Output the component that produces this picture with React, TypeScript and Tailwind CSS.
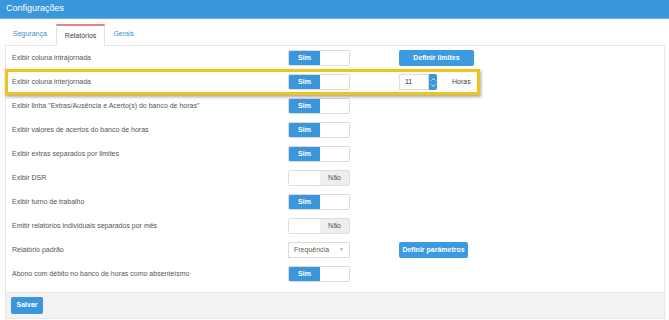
import React from 'react';

type Row = {
  label: string;
  on?: boolean;
  kind?: 'toggle' | 'select';
  extra?: 'limites' | 'horas' | 'parametros';
};

const rows: Row[] = [
  { label: 'Exibir coluna intrajornada', on: true, extra: 'limites' },
  { label: 'Exibir coluna interjornada', on: true, extra: 'horas' },
  { label: 'Exibir linha "Extras/Ausência e Acerto(s) do banco de horas"', on: true },
  { label: 'Exibir valores de acertos do banco de horas', on: true },
  { label: 'Exibir extras separados por limites', on: true },
  { label: 'Exibir DSR', on: false },
  { label: 'Exibir turno de trabalho', on: true },
  { label: 'Emitir relatórios individuais separados por mês', on: false },
  { label: 'Relatório padrão', kind: 'select', extra: 'parametros' },
  { label: 'Abono com débito no banco de horas como absenteísmo', on: true },
];

function Toggle({ on }: { on: boolean }) {
  return (
    <div className="flex h-[16px] w-[62px] rounded-[2px] border border-[#dcdcdc] overflow-hidden text-[7px]">
      {on ? (
        <>
          <div className="w-[31px] bg-[#3a97db] text-white font-bold flex items-center justify-center">Sim</div>
          <div className="flex-1 bg-white" />
        </>
      ) : (
        <>
          <div className="w-[31px] bg-white" />
          <div className="flex-1 bg-[#eeeeee] text-[#555] flex items-center justify-center">Não</div>
        </>
      )}
    </div>
  );
}

function BlueButton({ children, width }: { children: React.ReactNode; width: string }) {
  return (
    <div className={`${width} h-[16px] rounded-[2px] bg-[#3b9ae0] text-white text-[7px] font-bold flex items-center justify-center`}>
      {children}
    </div>
  );
}

export default function App() {
  return (
    <div
      className="relative w-[669px] h-[320px] bg-white overflow-hidden text-[#555]"
      style={{ fontFamily: '"Liberation Sans", Arial, sans-serif' }}
    >
      <div className="h-[19px] bg-[#3a97db] border-b border-[#6fb4e6] flex items-center pl-[6px]">
        <span className="text-white text-[9px]">Configurações</span>
      </div>

      <div className="mt-[5px] ml-[5px] mr-[5px] flex h-[21px] text-[7px]">
        <div className="pl-[8px] pr-[9px] flex items-center text-[#3a8fd0]">Segurança</div>
        <div className="px-[8px] flex items-center text-[#444] bg-white border-t-2 border-[#f08080] border-x border-x-[#e3e3e3] relative -mb-px">
          Relatórios
        </div>
        <div className="px-[8px] flex items-center text-[#3a8fd0]">Gerais</div>
      </div>

      <div className="ml-[5px] w-[660px] h-[274px] border border-[#e6e6e6] flex flex-col">
        <div className="flex-1 pl-[6px]">
          {rows.map((r, i) => (
            <div key={i} className="h-[24px] flex items-center text-[7px]">
              <div className="w-[276px]">{r.label}</div>
              <div className="w-[111px]">
                {r.kind === 'select' ? (
                  <div className="w-[62px] h-[16px] border border-[#dcdcdc] bg-white flex items-center justify-between px-[5px]">
                    <span className="text-[#6a5a48]">Frequência</span>
                    <span className="text-[#aaa] text-[5px]">▼</span>
                  </div>
                ) : (
                  <Toggle on={!!r.on} />
                )}
              </div>
              {r.extra === 'limites' && <BlueButton width="w-[75px]">Definir limites</BlueButton>}
              {r.extra === 'parametros' && <BlueButton width="w-[69px]">Definir parâmetros</BlueButton>}
              {r.extra === 'horas' && (
                <div className="flex items-center">
                  <div className="w-[30px] h-[16px] border border-[#dcdcdc] bg-white flex items-center pl-[5px] text-[#333]">11</div>
                  <div className="w-[8px] h-[16px] bg-[#3a97db] rounded-r-[2px] flex flex-col items-center justify-center gap-[3px]">
                    <svg width="5" height="3" viewBox="0 0 5 3">
                      <path d="M0.5 2.5 L2.5 0.5 L4.5 2.5" stroke="white" strokeWidth="0.8" fill="none" />
                    </svg>
                    <svg width="5" height="3" viewBox="0 0 5 3">
                      <path d="M0.5 0.5 L2.5 2.5 L4.5 0.5" stroke="white" strokeWidth="0.8" fill="none" />
                    </svg>
                  </div>
                  <span className="ml-[15px] text-[#444]">Horas</span>
                </div>
              )}
            </div>
          ))}
        </div>
        <div className="h-[26px] bg-[#f2f2f2] border-t border-[#e6e6e6] flex items-center pl-[5px]">
          <div className="w-[32px] h-[17px] rounded-[2px] bg-[#3a97db] text-white text-[7px] font-bold flex items-center justify-center">
            Salvar
          </div>
        </div>
      </div>

      <div className="absolute left-[5px] top-[69px] w-[475px] h-[26px] border-[3px] border-[#f2c318] shadow-[1px_2px_3px_rgba(0,0,0,0.35)]" />
    </div>
  );
}
